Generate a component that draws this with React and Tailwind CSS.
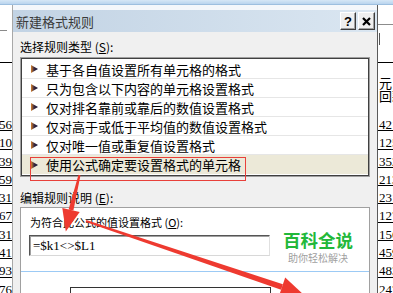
import React from "react";

const cjk = "font-['Noto_Sans_CJK_SC','Noto_Sans',sans-serif]";
const serif = "font-['Liberation_Serif',serif]";

const items = [
  "基于各自值设置所有单元格的格式",
  "只为包含以下内容的单元格设置格式",
  "仅对排名靠前或靠后的数值设置格式",
  "仅对高于或低于平均值的数值设置格式",
  "仅对唯一值或重复值设置格式",
  "使用公式确定要设置格式的单元格",
];

const leftNums = ["1256", "1210", "1339", "1459", "1531", "1667", "1731", "1841", "1993", "2076"];
const rightNums = ["4213", "1254", "3520", "2134", "2310", "1278", "1566", "4590", "4834", "2470"];

function Tri() {
  return (
    <svg width="7" height="8" viewBox="0 0 7 8" className="shrink-0">
      <defs>
        <linearGradient id="tg" x1="0" x2="1" y1="0" y2="0">
          <stop offset="0" stopColor="#d9822b" />
          <stop offset="0.45" stopColor="#3a2a40" />
          <stop offset="1" stopColor="#0a0a30" />
        </linearGradient>
      </defs>
      <polygon points="0,0 7,4 0,8" fill="url(#tg)" />
    </svg>
  );
}

function LeftStrip() {
  return (
    <div className="w-[12px] shrink-0 flex flex-col overflow-hidden">
      <div className="h-[57px] shrink-0 pt-[25px]">
        <div className="w-[7px] h-px bg-[#8a8a8a]" />
      </div>
      <div className="h-[51px] shrink-0 border-t border-black" />
      {leftNums.map((n, i) => (
        <div key={i} className={`h-[18.3px] shrink-0 border-b border-black flex justify-end pt-[5px] ${serif} text-[13px] leading-[13px] text-black whitespace-nowrap`}>
          <span>{n}</span>
        </div>
      ))}
    </div>
  );
}

function RightStrip() {
  return (
    <div className="w-[15px] shrink-0 flex flex-col overflow-hidden">
      <div className="h-[20px] shrink-0 border-b border-[#8c8c8c]" />
      <div className="h-[37px] shrink-0 pt-[8px] pl-[1px]">
        <div className="w-px h-[12px] bg-[#555]" />
      </div>
      <div className={`h-[51px] shrink-0 border-t border-black pt-[13px] pl-[1px] ${cjk} text-[13px] leading-[13px] text-black whitespace-nowrap overflow-hidden`}>
        <div>元，</div>
        <div>回款</div>
      </div>
      {rightNums.map((n, i) => (
        <div key={i} className={`h-[18.3px] shrink-0 border-b border-black flex pt-[5px] pl-[1px] ${serif} text-[13px] leading-[13px] text-black whitespace-nowrap`}>
          <span>{n}</span>
        </div>
      ))}
    </div>
  );
}

function TitleButton({ children, w }) {
  return (
    <div className={`${w} h-[18px] bg-[#efefef] border border-t-white border-l-white border-r-[#3c3c3c] border-b-[#3c3c3c] shadow-[inset_-1px_-1px_0_#a0a0a0] flex items-center justify-center`}>
      {children}
    </div>
  );
}

function Dialog() {
  return (
    <div className="absolute left-[12px] top-[5px] w-[366px] h-[300px] overflow-hidden bg-[#f0f0f0] border-l border-l-[#a8a8a8] border-r border-r-[#5a5a5a] flex flex-col">
      <div className="h-[5px] shrink-0 bg-[#f4f7fb]" />
      <div className="h-[22px] shrink-0 bg-gradient-to-r from-[#c2d3e4] to-[#dae6f1] flex items-start justify-between pl-[3px] pr-[2px]">
        <span className={`${cjk} text-[13px] leading-[13px] text-[#3a3a3a] mt-[5px]`}>新建格式规则</span>
        <div className="flex gap-[2px] mt-[2px]">
          <TitleButton w="w-[16px]">
            <span className="font-['Liberation_Sans',sans-serif] font-bold text-[13px] leading-none text-black">?</span>
          </TitleButton>
          <TitleButton w="w-[17px]">
            <svg width="9" height="9" viewBox="0 0 9 9">
              <path d="M1 1 L8 8 M8 1 L1 8" stroke="#000" strokeWidth="2.2" />
            </svg>
          </TitleButton>
        </div>
      </div>
      <div className={`shrink-0 flex flex-col pl-[7px] pt-[8px] ${cjk} text-black`}>
        <div className="shrink-0 text-[12px] leading-[13px]">
          选择规则类型 (<span className="underline">S</span>):
        </div>
        <div className="shrink-0 mt-[4px] w-[350px] h-[120px] border border-[#a0a0a0]">
          <div className="h-full border border-[#404040] bg-white pt-[1px]">
            {items.map((t, i) => (
              <div
                key={i}
                className={`h-[19px] flex items-center pl-[9px] ${i === 5 ? "bg-[#ece9d8]" : "border-b border-[#e6e6e6]"}`}
              >
                <Tri />
                <span className="ml-[8px] text-[13px] leading-[19px] whitespace-nowrap">{t}</span>
              </div>
            ))}
          </div>
        </div>
        <div className="shrink-0 mt-[14px] text-[12px] leading-[13px]">
          编辑规则说明 (<span className="underline">E</span>):
        </div>
        <div className="shrink-0 mt-[3px] w-[350px] h-[120px] border border-[#a0a0a0] bg-white flex flex-col">
          <div className="shrink-0 pl-[9px] pt-[8px] text-[11px] leading-[12px]">
            为符合此公式的值设置格式 (<span className="underline">O</span>):
          </div>
          <div className="shrink-0 ml-[8px] mt-[7px] w-[241px] h-[21px] bg-white border border-t-[#555] border-l-[#555] border-r-[#e0e0e0] border-b-[#d8d8d8] shadow-[inset_1px_1px_0_#a0a0a0] flex items-center pl-[3px]">
            <span className={`${serif} text-[13px] leading-none text-black`}>=$k1&lt;&gt;$L1</span>
          </div>
          <div className="shrink-0 mt-[15px] h-px bg-[#9ccaf5]" />
          <div className="shrink-0 mt-[15px] ml-[49px] w-[201px] h-[30px] border-t border-l border-r border-[#333]" />
        </div>
      </div>
    </div>
  );
}

export default function App() {
  return (
    <div className="relative w-[393px] h-[293px] overflow-hidden bg-white">
      <div className="h-[5px] bg-gradient-to-b from-[#d6e7f6] to-[#b9d4ee] border-b border-[#9dbfdf]" />
      <div className="flex h-[288px]">
        <LeftStrip />
        <div className="flex-1" />
        <RightStrip />
      </div>
      <Dialog />
      <div className="absolute left-[30px] top-[157px] w-[216px] h-[24px] border border-[#e8403a]" />
      <div className={`absolute left-[272px] top-[231px] w-[92px] bg-white flex flex-col items-center ${cjk}`}>
        <div className="text-[17.5px] leading-[18px] font-bold text-[#22b83a]">百科全说</div>
        <div className="mt-[3px] text-[10px] leading-[12px] text-[#a0a0a0]">助你轻松解决</div>
      </div>
      <svg className="absolute left-0 top-0 pointer-events-none" width="393" height="293" viewBox="0 0 393 293">
        <polygon points="78.5,174.8 80.5,175.2 73.4,210.6 68.6,209.4" fill="#ee3a30" />
        <polygon points="62.3,207.9 79.7,212.1 65.8,231.4" fill="#ee3a30" />
        <polygon points="86.32,220.05 282.9,284.35 281.1,289.65 85.68,221.95" fill="#ee3a30" />
        <polygon points="285.2,277.5 302.9,294 278.8,296.5" fill="#ee3a30" />
      </svg>
    </div>
  );
}
